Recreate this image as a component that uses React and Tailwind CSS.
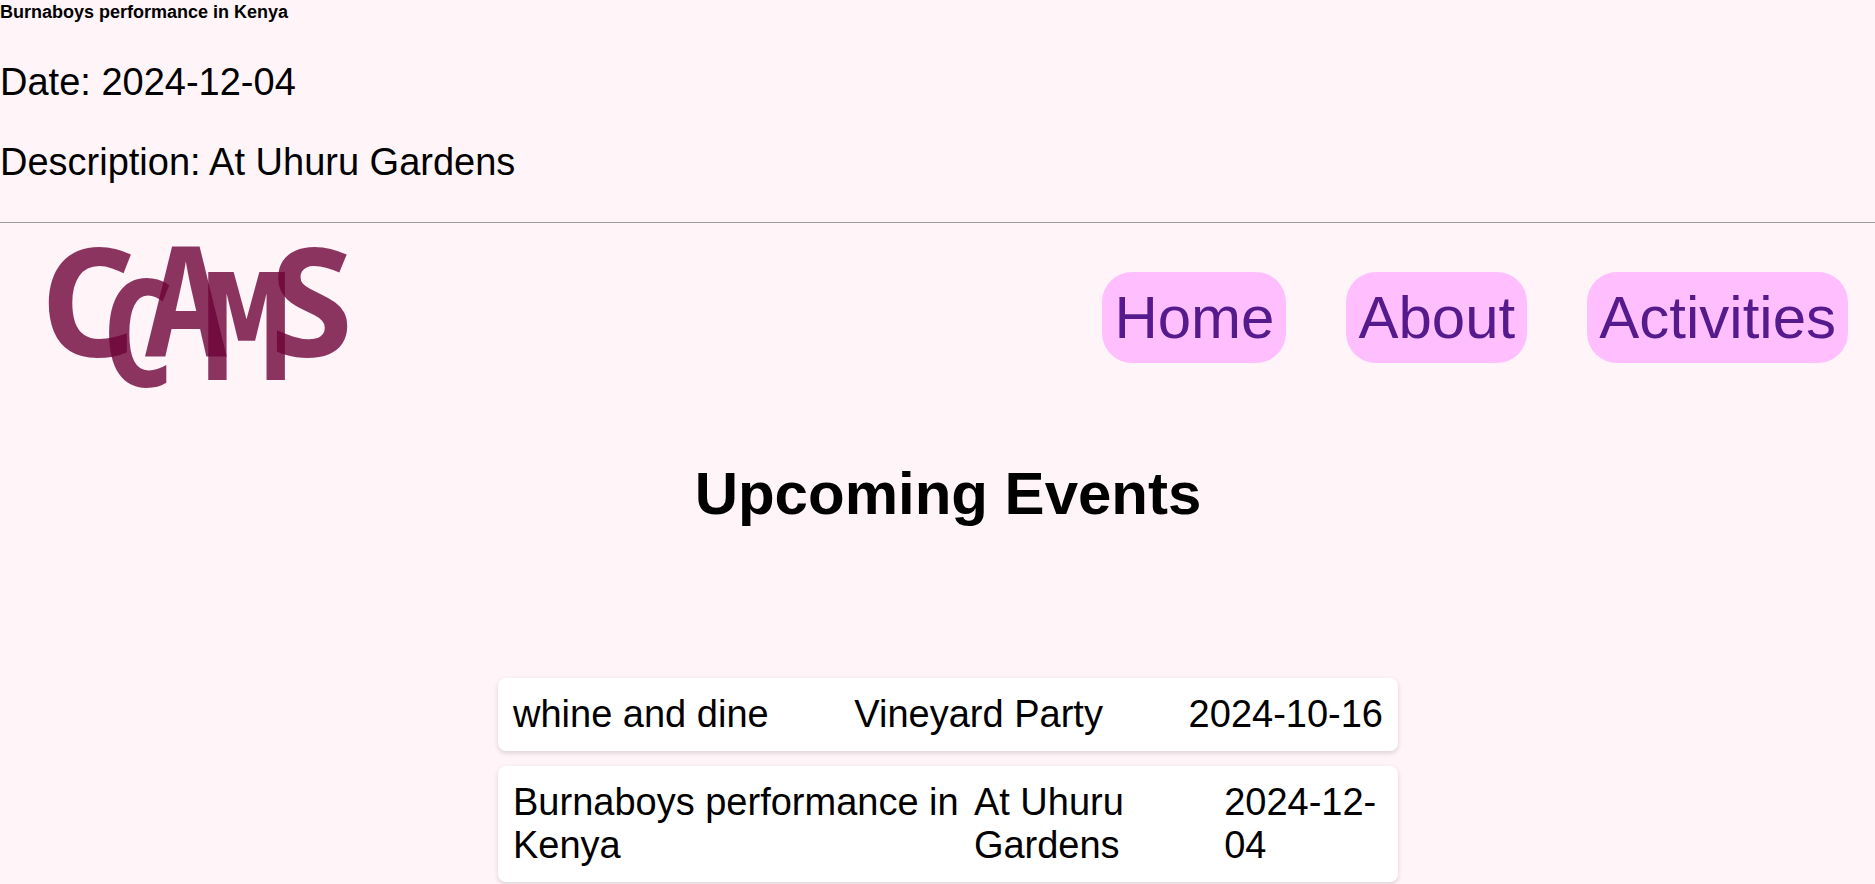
const navLinks = ["Home", "About", "Activities"];

const events = [
  { name: "whine and dine", description: "Vineyard Party", date: "2024-10-16" },
  { name: "Burnaboys performance in Kenya", description: "At Uhuru Gardens", date: "2024-12-04" },
];

function Logo() {
  return (
    <svg
      viewBox="0 0 300 143"
      className="h-[143px] w-[300px] shrink-0 overflow-visible"
      role="img"
      aria-label="CCAMS"
    >
      <g fill="#6d0438" fillOpacity="0.8" fontWeight="700">
        <text x="-8" y="111" fontSize="151" fontFamily="'Open Sans', sans-serif">C</text>
        <text x="55" y="141" fontSize="149" fontFamily="'Open Sans Condensed', 'Open Sans', sans-serif">C</text>
        <text x="97" y="111" fontSize="153" fontFamily="'Open Sans Condensed', 'Open Sans', sans-serif">A</text>
        <text x="154" y="134" fontSize="148" fontFamily="'DejaVu Sans Mono', monospace">M</text>
        <text x="222" y="111" fontSize="151" fontFamily="'Open Sans', sans-serif">S</text>
      </g>
    </svg>
  );
}

export default function App() {
  return (
    <div className="min-h-screen overflow-x-hidden bg-[#fff5f9] font-['Liberation_Sans',Arial,sans-serif] text-black">
      <section>
        <h5 className="text-lg leading-6 font-bold">Burnaboys performance in Kenya</h5>
        <p className="mt-[37px] text-[38px] leading-[43px]">Date: 2024-12-04</p>
        <p className="mt-[37px] text-[38px] leading-[43px]">Description: At Uhuru Gardens</p>
      </section>
      <hr className="mt-[38px] border-[#9a9a9a]" />
      <header className="flex items-center justify-between pt-[23px] pr-[27px] pl-12">
        <Logo />
        <nav className="flex gap-[60px]">
          {navLinks.map((label) => (
            <a
              key={label}
              href="#"
              className="rounded-[30px] bg-[#ffbfff] p-3 text-6xl leading-[67px] text-[#551a8b]"
            >
              {label}
            </a>
          ))}
        </nav>
      </header>
      <main className="pl-[21px]">
        <h2 className="mt-[70px] text-center text-6xl leading-[69px] font-bold">Upcoming Events</h2>
        <ul className="mx-auto mt-[150px] flex max-w-[900px] flex-col gap-[15px]">
          {events.map((event) => (
            <li
              key={event.name}
              className="flex justify-between rounded-lg bg-white p-[15px] text-[38px] leading-[43px] shadow-[0_2px_5px_rgba(0,0,0,0.15)]"
            >
              <span>{event.name}</span>
              <span>{event.description}</span>
              <span>{event.date}</span>
            </li>
          ))}
        </ul>
      </main>
    </div>
  );
}
